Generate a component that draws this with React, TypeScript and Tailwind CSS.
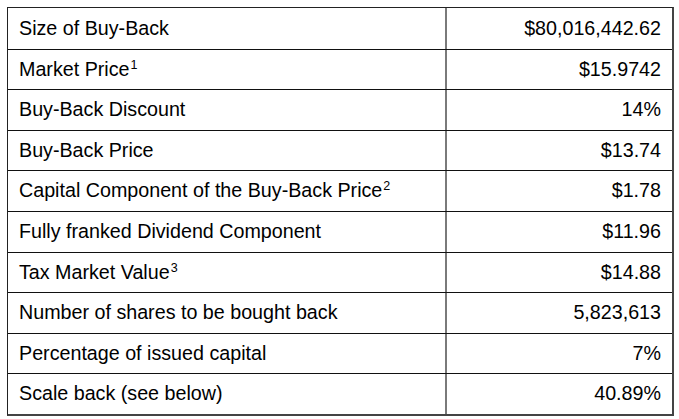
const rows: { label: string; sup?: string; value: string }[] = [
  { label: "Size of Buy-Back", value: "$80,016,442.62" },
  { label: "Market Price", sup: "1", value: "$15.9742" },
  { label: "Buy-Back Discount", value: "14%" },
  { label: "Buy-Back Price", value: "$13.74" },
  { label: "Capital Component of the Buy-Back Price", sup: "2", value: "$1.78" },
  { label: "Fully franked Dividend Component", value: "$11.96" },
  { label: "Tax Market Value", sup: "3", value: "$14.88" },
  { label: "Number of shares to be bought back", value: "5,823,613" },
  { label: "Percentage of issued capital", value: "7%" },
  { label: "Scale back (see below)", value: "40.89%" },
]

export default function App() {
  return (
    <div className="w-[679px] h-[419px] bg-white pt-[7px] pl-[7px] font-['Liberation_Sans',Arial,sans-serif] text-[19.7px] text-black">
      <div className="w-[667px] border-l border-r-2 border-t border-b-2 border-l-[#222] border-r-[#444] border-t-[#222] border-b-[#444]">
        {rows.map((r, i) => (
          <div
            key={r.label}
            className={`flex h-[40.6px] ${i > 0 ? "border-t border-[#111]" : ""}`}
          >
            <div className="w-[439px] shrink-0 flex items-center pl-[11px] border-r-2 border-[#7a7a7a]">
              <span>
                {r.label}
                {r.sup && <sup className="text-[12.5px] -top-[7px] ml-[1px]">{r.sup}</sup>}
              </span>
            </div>
            <div className="flex-1 flex items-center justify-end pr-[11px]">{r.value}</div>
          </div>
        ))}
      </div>
    </div>
  )
}
